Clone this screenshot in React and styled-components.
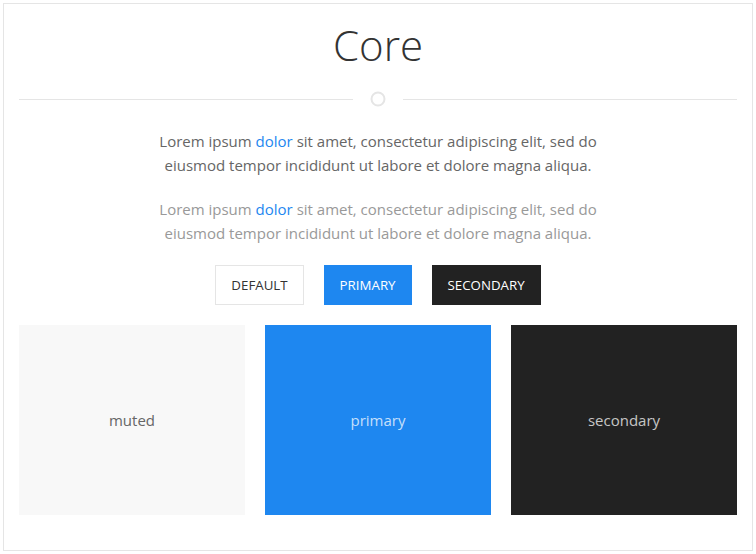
import React from "react";
import styled, { createGlobalStyle } from "styled-components";

const Global = createGlobalStyle`
  html, body { margin: 0; padding: 0; background: #fff; }
  body { padding: 3px; font-family: "Open Sans", "Noto Sans", sans-serif; color: #666; }
  * { box-sizing: border-box; }
`;

const Frame = styled.div`
  width: 750px;
  height: 548px;
  border: 1px solid #e5e5e5;
  padding: 15px 15px 34px;
  display: flex;
  flex-direction: column;
  align-items: center;
`;

const Title = styled.h1`
  margin: 0;
  font-size: 42px;
  line-height: 52px;
  font-weight: 300;
  color: #333;
  text-align: center;
`;

const Divider = styled.div`
  width: 100%;
  display: flex;
  align-items: center;
  height: 20px;
  margin-top: 18px;
  &::before, &::after {
    content: "";
    flex: 1;
    border-bottom: 1px solid #e5e5e5;
  }
`;

const DividerIcon = styled.span`
  width: 50px;
  display: flex;
  justify-content: center;
  align-items: center;
`;

const Para = styled.p`
  margin: 20px 0 0;
  width: 460px;
  text-align: center;
  font-size: 15px;
  line-height: 24px;
  color: ${(p) => p.$color};
`;

const Link = styled.a`
  color: #1e87f0;
  text-decoration: none;
`;

const Buttons = styled.div`
  display: flex;
  gap: 20px;
  margin-top: 20px;
`;

const Button = styled.button`
  height: 40px;
  padding: 0 15px;
  font-family: inherit;
  font-size: 13.3px;
  text-transform: uppercase;
  border: 1px solid ${(p) => p.$border};
  background: ${(p) => p.$bg};
  color: ${(p) => p.$fg};
  cursor: pointer;
`;

const Tiles = styled.div`
  width: 100%;
  display: grid;
  grid-template-columns: repeat(3, 1fr);
  gap: 20px;
  margin-top: 20px;
`;

const Tile = styled.div`
  height: 190px;
  display: flex;
  align-items: center;
  justify-content: center;
  background: ${(p) => p.$bg};
  color: ${(p) => p.$fg};
  font-size: 15px;
`;

export default function App() {
  return (
    <>
      <Global />
      <Frame>
        <Title>Core</Title>
        <Divider>
          <DividerIcon>
            <svg width="20" height="20" viewBox="0 0 20 20">
              <circle cx="10" cy="10" r="6.5" fill="none" stroke="#e5e5e5" strokeWidth="2" />
            </svg>
          </DividerIcon>
        </Divider>
        <Para $color="#666">
          Lorem ipsum <Link href="#">dolor</Link> sit amet, consectetur adipiscing elit, sed do eiusmod tempor incididunt ut labore et dolore magna aliqua.
        </Para>
        <Para $color="#999">
          Lorem ipsum <Link href="#">dolor</Link> sit amet, consectetur adipiscing elit, sed do eiusmod tempor incididunt ut labore et dolore magna aliqua.
        </Para>
        <Buttons>
          <Button $border="#e5e5e5" $bg="#fff" $fg="#333">Default</Button>
          <Button $border="#1e87f0" $bg="#1e87f0" $fg="#fff">Primary</Button>
          <Button $border="#222" $bg="#222" $fg="#fff">Secondary</Button>
        </Buttons>
        <Tiles>
          <Tile $bg="#f8f8f8" $fg="#666">muted</Tile>
          <Tile $bg="#1e87f0" $fg="rgba(255,255,255,0.75)">primary</Tile>
          <Tile $bg="#222" $fg="rgba(255,255,255,0.75)">secondary</Tile>
        </Tiles>
      </Frame>
    </>
  );
}
